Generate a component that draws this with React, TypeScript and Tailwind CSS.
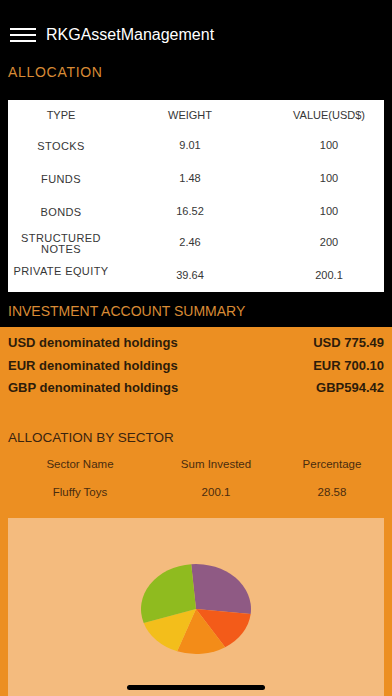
import React from "react";

const font = { fontFamily: '"Liberation Sans", Arial, sans-serif' };

const rows = [
  { type: ["STOCKS"], w: "9.01", v: "100" },
  { type: ["FUNDS"], w: "1.48", v: "100" },
  { type: ["BONDS"], w: "16.52", v: "100" },
  { type: ["STRUCTURED", "NOTES"], w: "2.46", v: "200" },
];

function Pie() {
  const cx = 196, cy = 608, rx = 55, ry = 45;
  const pt = (deg: number) => {
    const t = (deg * Math.PI) / 180;
    return `${(cx + rx * Math.cos(t)).toFixed(2)} ${(cy + ry * Math.sin(t)).toFixed(2)}`;
  };
  const slices = [
    { a: -95, b: 6.4, c: "#8f5a84" },
    { a: 6.4, b: 58, c: "#f35b19" },
    { a: 58, b: 110, c: "#f38c18" },
    { a: 110, b: 162, c: "#f3be1b" },
    { a: 162, b: 265, c: "#8fbb1f" },
  ];
  return (
    <svg width="112" height="92" viewBox="140 562 112 92">
      {slices.map((s, i) => (
        <path
          key={i}
          d={`M${cx} ${cy} L${pt(s.a)} A${rx} ${ry} 0 ${s.b - s.a > 180 ? 1 : 0} 1 ${pt(s.b)} Z`}
          fill={s.c}
        />
      ))}
    </svg>
  );
}

export default function App() {
  return (
    <div className="relative h-[696px] w-[392px] overflow-hidden bg-black flex flex-col" style={font}>
      {/* Header */}
      <div className="pt-6 h-[46px] flex items-center pl-[10px]">
        <div className="flex flex-col gap-[3.5px] w-[26px]">
          <div className="h-[2.5px] bg-white" />
          <div className="h-[2.5px] bg-white" />
          <div className="h-[2.5px] bg-white" />
        </div>
        <span className="ml-[10px] text-[16px] leading-[22px] text-white">RKGAssetManagement</span>
      </div>

      <div className="mt-[17.5px] px-2 text-[14px] leading-[17px] tracking-[0.7px] text-[#d98b35]">ALLOCATION</div>

      {/* Allocation table */}
      <div className="mt-[19.5px] mx-2 h-[192px] bg-white text-[11px] text-[#363636]">
        <div className="grid grid-cols-[106px_152px_1fr] h-[30px] items-center text-center">
          <div>TYPE</div>
          <div>WEIGHT</div>
          <div className="pl-2">VALUE(USD$)</div>
        </div>
        {rows.map((r, i) => (
          <div
            key={i}
            className={`grid grid-cols-[106px_152px_1fr] items-center text-center ${i === 3 ? "h-[29px]" : "h-[33px]"}`}
          >
            <div className="leading-[11px] tracking-[0.4px]">
              {r.type.map((t) => (
                <div key={t}>{t}</div>
              ))}
            </div>
            <div className="-mt-[2px]">{r.w}</div>
            <div className="pl-2 -mt-[2px]">{r.v}</div>
          </div>
        ))}
        <div className="grid grid-cols-[106px_152px_1fr] h-[34px] items-center text-center">
          <div className="self-start pt-[8px] leading-[11px] tracking-[0.4px]">PRIVATE EQUITY</div>
          <div>39.64</div>
          <div className="pl-2">200.1</div>
        </div>
      </div>

      <div className="mt-[11px] mb-[7px] px-2 text-[14px] leading-[17px] text-[#d98b35]">INVESTMENT ACCOUNT SUMMARY</div>

      {/* Orange section */}
      <div className="flex-1 bg-[#ec8f22] flex flex-col pt-[4.75px] text-[#2e1c0a]">
        {[
          ["USD denominated holdings", "USD 775.49"],
          ["EUR denominated holdings", "EUR 700.10"],
          ["GBP denominated holdings", "GBP594.42"],
        ].map(([l, v]) => (
          <div key={l} className="flex justify-between items-center h-[22.5px] px-2 text-[13px] font-bold">
            <span>{l}</span>
            <span>{v}</span>
          </div>
        ))}

        <div className="mt-[29.25px] px-2 text-[13.5px] leading-[17px] text-[#3a2410]">ALLOCATION BY SECTOR</div>

        <div className="mt-[6px] px-2 text-[11.5px] text-[#4a2c0e]">
          <div className="grid grid-cols-[144px_128px_1fr] h-[27px] items-center text-center">
            <div>Sector Name</div>
            <div>Sum Invested</div>
            <div>Percentage</div>
          </div>
          <div className="grid grid-cols-[144px_128px_1fr] h-[28px] items-center text-center">
            <div>Fluffy Toys</div>
            <div>200.1</div>
            <div>28.58</div>
          </div>
        </div>

        <div className="mt-[11px] mx-2 flex-1 bg-[#f4bb7e] flex justify-center pt-[45px]">
          <div className="h-[92px]">
            <Pie />
          </div>
        </div>
      </div>

      {/* Home indicator */}
      <div className="absolute left-[127px] bottom-[6px] h-[5px] w-[138px] rounded-full bg-black" />
    </div>
  );
}
